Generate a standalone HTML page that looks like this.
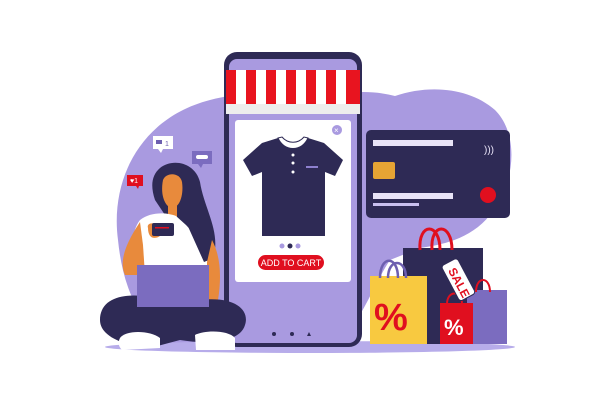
<!DOCTYPE html>
<html><head><meta charset="utf-8"><style>
html,body{margin:0;padding:0;background:#fff;width:612px;height:408px;overflow:hidden}
svg{display:block}
</style></head><body>
<svg width="612" height="408" viewBox="0 0 612 408" xmlns="http://www.w3.org/2000/svg">
<path d="M118 240 C110 180 140 118 210 100 C250 90 300 88 330 95 C360 90 380 92 395 96 C430 84 470 88 495 110 C520 135 515 185 490 215 C470 240 440 245 420 248 L390 260 C370 290 360 330 330 345 L170 345 C135 320 122 280 118 240 Z" fill="#a99ae0"/>
<ellipse cx="310" cy="347" rx="205" ry="6" fill="#b7acea"/>
<rect x="366" y="130" width="144" height="88" rx="5" fill="#2e2a55"/>
<rect x="373" y="140" width="80" height="6" fill="#e8e3f7"/>
<rect x="373" y="162" width="22" height="17" rx="2" fill="#e6a434"/>
<rect x="373" y="193" width="80" height="6" fill="#e8e3f7"/>
<rect x="373" y="203" width="46" height="3" fill="#c9c0ef"/>
<circle cx="488" cy="195" r="8" fill="#e00f1f"/>
<text x="484" y="153" font-family="Liberation Sans,sans-serif" font-size="10" fill="#e8e3f7">)))</text>
<rect x="403" y="248" width="80" height="96" fill="#2e2a55"/>
<path d="M420 250 C418 222 440 222 440 250 M432 250 C430 222 452 222 452 250" stroke="#e00f1f" stroke-width="3" fill="none"/>
<rect x="467" y="290" width="40" height="54" fill="#7b6cbf"/>
<path d="M476 292 C476 276 490 276 490 292" stroke="#e00f1f" stroke-width="2" fill="none"/>
<rect x="370" y="276" width="57" height="68" fill="#f8c940"/>
<path d="M380 278 C380 255 398 255 398 278 M388 278 C388 258 406 258 406 278" stroke="#6d5fb0" stroke-width="2.5" fill="none"/>
<text x="374" y="330" font-family="Liberation Sans,sans-serif" font-weight="bold" font-size="38" fill="#e00f1f">%</text>
<rect x="440" y="303" width="33" height="41" fill="#e00f1f"/>
<path d="M447 304 C447 290 462 290 462 304" stroke="#e00f1f" stroke-width="2" fill="none"/>
<text x="444" y="335" font-family="Liberation Sans,sans-serif" font-weight="bold" font-size="22" fill="#fff">%</text>
<g transform="translate(449 262) rotate(62)"><rect x="0" y="-9" width="40" height="18" rx="3" fill="#fff" stroke="#2e2a55" stroke-width="1"/><text x="7" y="5" font-family="Liberation Sans,sans-serif" font-weight="bold" font-size="12" fill="#e00f1f">SALE</text></g>
<rect x="224" y="52" width="138" height="295" rx="13" fill="#2e2a55"/>
<rect x="229" y="59" width="128" height="284" rx="8" fill="#a99ae0"/>
<rect x="226" y="70" width="134" height="36" fill="#e8141f"/>
<g fill="#fff">
<rect x="236" y="70" width="10" height="36"/><rect x="256" y="70" width="10" height="36"/><rect x="276" y="70" width="10" height="36"/><rect x="296" y="70" width="10" height="36"/><rect x="316" y="70" width="10" height="36"/><rect x="336" y="70" width="10" height="36"/>
</g>
<rect x="226" y="104" width="134" height="10" fill="#ededed"/>
<rect x="235" y="120" width="116" height="162" rx="3" fill="#fff"/>
<circle cx="337" cy="130" r="5" fill="#a99ae0"/><text x="334" y="133" font-family="Liberation Sans,sans-serif" font-size="8" fill="#fff">×</text>
<path d="M278 138 L262 143 L243 160 L252 176 L262 172 L262 236 L325 236 L325 172 L335 176 L343 160 L324 143 L308 138 C302 148 285 148 278 138 Z" fill="#2e2a55"/>
<path d="M278 138 C284 152 302 152 308 138 L304 137 C298 144 288 144 282 137 Z" fill="#fff" stroke="#2e2a55" stroke-width="1"/>
<circle cx="293" cy="155" r="1.5" fill="#fff"/><circle cx="293" cy="163" r="1.5" fill="#fff"/><circle cx="293" cy="172" r="1.5" fill="#fff"/>
<rect x="306" y="166" width="12" height="2" fill="#8e80cf"/>
<circle cx="282" cy="246" r="2.5" fill="#a99ae0"/><circle cx="290" cy="246" r="2.5" fill="#2e2a55"/><circle cx="298" cy="246" r="2.5" fill="#a99ae0"/>
<rect x="258" y="255" width="66" height="15" rx="7.5" fill="#e00f1f"/>
<text x="291" y="266" text-anchor="middle" font-family="Liberation Sans,sans-serif" font-size="9" fill="#fff">ADD TO CART</text>
<circle cx="274" cy="334" r="2" fill="#2e2a55"/><circle cx="292" cy="334" r="2" fill="#2e2a55"/><path d="M309 332 L311 336 L307 336 Z" fill="#2e2a55"/>
<rect x="153" y="136" width="20" height="13" fill="#fff"/><path d="M158 149 L161 153 L163 149Z" fill="#fff"/><rect x="156" y="140" width="6" height="4" fill="#6d5fb0"/><text x="165" y="146" font-family="Liberation Sans,sans-serif" font-size="7" fill="#6d5fb0">1</text>
<rect x="192" y="151" width="20" height="13" fill="#7b6cbf"/><path d="M198 164 L201 168 L203 164Z" fill="#7b6cbf"/><rect x="196" y="155" width="12" height="4" rx="2" fill="#fff"/>
<rect x="127" y="175" width="16" height="11" fill="#e00f1f"/><path d="M136 186 L138 189 L139 186Z" fill="#e00f1f"/><text x="130" y="183" font-family="Liberation Sans,sans-serif" font-size="7" fill="#fff">♥1</text>
<!-- woman -->
<path d="M160 168 C172 158 195 162 200 182 C204 208 220 230 214 255 C212 262 205 266 198 262 L175 230 L155 200 C150 185 152 175 160 168 Z" fill="#2e2a55"/>
<path d="M163 180 C166 172 180 172 182 182 C184 196 179 208 172 208 C165 207 160 195 163 180 Z" fill="#e88a3c"/>
<path d="M160 172 C168 165 182 168 186 180 L180 176 C172 172 166 174 160 180 Z" fill="#2e2a55"/>
<rect x="168" y="205" width="9" height="12" fill="#e88a3c"/>
<path d="M140 220 C150 212 166 212 176 216 L186 225 L200 240 L210 265 L135 265 C130 250 132 230 140 220 Z" fill="#fff"/>
<path d="M186 222 C196 235 212 245 214 258 L204 262 Z" fill="#2e2a55"/>
<path d="M140 222 C128 240 118 260 125 275 L145 275 L143 245 Z" fill="#e88a3c"/>
<path d="M212 240 C220 255 222 275 218 300 L207 300 L207 262 Z" fill="#e88a3c"/>
<path d="M148 228 C146 222 156 222 160 226 L160 236 C154 240 148 238 148 228 Z" fill="#e88a3c"/>
<rect x="152" y="223" width="22" height="13" rx="2" fill="#2e2a55"/><rect x="155" y="227" width="14" height="1.5" fill="#e00f1f"/>
<path d="M100 320 C100 300 120 292 150 297 L200 300 C235 296 250 310 245 325 C240 342 210 345 180 340 L150 348 C120 345 100 335 100 320 Z" fill="#2e2a55"/>
<rect x="137" y="265" width="72" height="42" fill="#7b6cbf"/>
<path d="M120 338 C125 330 150 330 160 338 L160 348 L122 350 C118 346 118 342 120 338 Z" fill="#fff"/>
<path d="M195 335 C205 330 228 330 235 338 L235 350 L196 350 Z" fill="#fff"/>
</svg>
</body></html>
